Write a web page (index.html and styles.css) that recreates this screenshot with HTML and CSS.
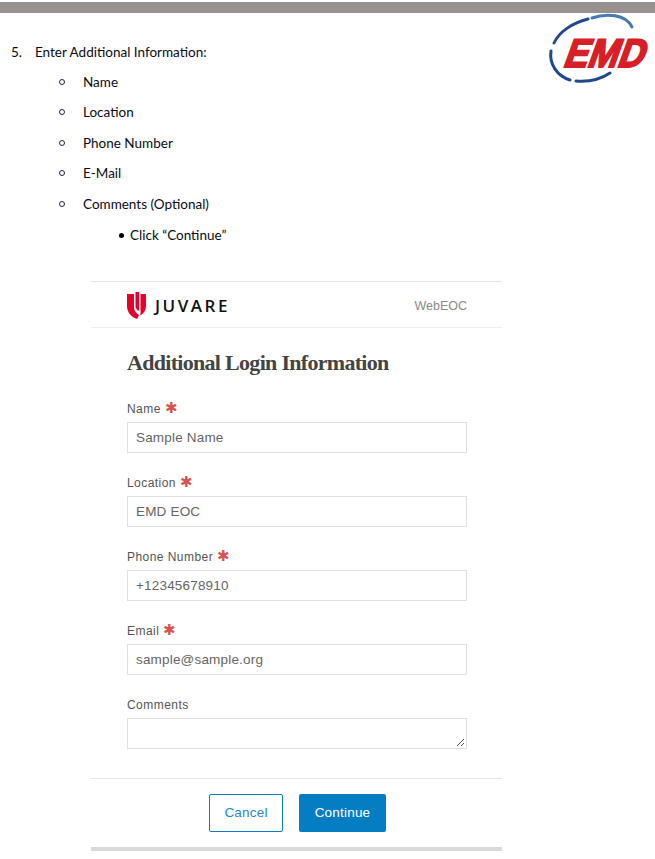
FILE: index.html
```html
<!DOCTYPE html>
<html lang="en">
<head>
<meta charset="utf-8">
<title>Enter Additional Information</title>
<link rel="stylesheet" href="styles.css">
</head>
<body>
<div class="band"></div>
<section class="doc">
  <div class="steps">
    <div class="step"><span class="num">5.</span><span>Enter Additional Information:</span></div>
    <div class="sub"><span class="ring"></span><span>Name</span></div>
    <div class="sub"><span class="ring"></span><span>Location</span></div>
    <div class="sub"><span class="ring"></span><span>Phone Number</span></div>
    <div class="sub"><span class="ring"></span><span>E-Mail</span></div>
    <div class="sub"><span class="ring"></span><span>Comments (Optional)</span></div>
    <div class="subsub"><span class="dot"></span><span>Click “Continue”</span></div>
  </div>
  <svg class="emd" width="107" height="70" viewBox="0 0 107 70" aria-label="EMD">
    <path class="arc dark" d="M6 29 C 11 18 24 9 40 5" />
    <path class="arc light" d="M44 4 C 58 -1 78 0 84 13" />
    <path class="arc dark" d="M3 37 C 1 50 9 62 22 66" />
    <path class="arc dark" d="M28 67 C 40 68 53 65 62 59" />
    <text class="emd-text" transform="translate(14 53) skewX(-20) scale(.9 1)">EMD</text>
  </svg>
</section>
<main class="panel">
  <header class="panel-head">
    <div class="brand">
      <svg width="19" height="27" viewBox="0 0 19 27">
        <path fill="#e4022d" d="M0 2 H7 V15 C7 19 9 21 12 23 L10 27 C4 25 0 20 0 14 Z"/>
        <path fill="#e4022d" d="M8.500 0 H12 V19 C10 18 8.500 16.500 8.500 14 Z"/>
        <path fill="#e4022d" d="M13.500 2 H19 V14 C19 18 17 21 13.500 23.500 Z"/>
      </svg>
      <span class="brand-name">JUVARE</span>
    </div>
    <span class="product">WebEOC</span>
  </header>
  <form class="form">
    <h1 class="title">Additional Login Information</h1>
    <div class="field">
      <div class="label">Name <span class="req">✱</span></div>
      <div class="input">Sample Name</div>
    </div>
    <div class="field">
      <div class="label">Location <span class="req">✱</span></div>
      <div class="input">EMD EOC</div>
    </div>
    <div class="field">
      <div class="label">Phone Number <span class="req">✱</span></div>
      <div class="input">+12345678910</div>
    </div>
    <div class="field">
      <div class="label">Email <span class="req">✱</span></div>
      <div class="input">sample@sample.org</div>
    </div>
    <div class="field">
      <div class="label">Comments</div>
      <div class="input area">
        <svg width="9" height="9" viewBox="0 0 9 9"><path d="M8 1 L1 8 M8 5 L5 8" stroke="#555" stroke-width="1" fill="none"/></svg>
      </div>
    </div>
  </form>
  <footer class="actions">
    <span class="btn ghost">Cancel</span>
    <span class="btn solid">Continue</span>
  </footer>
</main>
</body>
</html>
```
FILE: styles.css
```css
* { box-sizing: border-box; }
html, body { margin: 0; padding: 0; background: #fff; }
body { width: 655px; height: 859px; overflow: hidden; position: relative; }

.band { height: 11px; margin-top: 2px; background: #97928f; }

.doc { display: flex; justify-content: space-between; align-items: flex-start; height: 268px; }
.steps { padding-top: 24px; font: 13.500px/30.500px Lato, sans-serif; color: #0b0b16; }
.step { display: flex; padding-left: 11px; margin-bottom: -1px; }
.num { width: 24px; }
.sub { display: flex; align-items: center; padding-left: 59px; }
.ring { width: 6px; height: 6px; border: 1px solid #1c2a50; border-radius: 50%; margin-right: 18px; }
.subsub { display: flex; align-items: center; padding-left: 119px; margin-top: 1px; }
.dot { width: 5px; height: 5px; background: #000; border-radius: 50%; margin-right: 6px; }

.emd { flex: none; margin-top: 1px; overflow: visible; }
.arc { fill: none; stroke-width: 3; stroke-linecap: round; }
.arc.dark { stroke: #21498f; }
.arc.light { stroke: #4a78b5; }
.emd-text { font: 700 40px "Liberation Sans", sans-serif; fill: #d81f27; stroke: #d81f27; stroke-width: 2; }

.panel { width: 411px; margin-left: 91px; border-top: 1px solid #e4e4e4; border-bottom: 4px solid #d9d9d9; height: 570px; color: #444; font-family: "Liberation Sans", sans-serif; }
.panel-head { height: 46px; padding: 8px 35px 0 36px; display: flex; justify-content: space-between; align-items: center; border-bottom: 1px solid #eee; }
.brand { display: flex; align-items: center; gap: 9px; height: 30px; margin-top: -6px; }
.brand-name { font: 600 17px "Open Sans", sans-serif; letter-spacing: 2.500px; color: #111; }
.product { font-size: 12.500px; color: #8a8a8a; margin-top: -6px; }

.form { padding: 0 35px 0 36px; height: 451px; border-bottom: 1px solid #e4e4e4; }
.title { margin: 0; padding: 21px 0 22px; font: 700 22px/28px "Liberation Serif", serif; color: #444; letter-spacing: -.7px; }
.field { margin-bottom: 20px; }
.label { font-size: 12px; line-height: 20px; height: 23px; color: #555; letter-spacing: .45px; }
.req { color: #d9534f; font-size: 15px; line-height: 14px; }
.input { height: 31px; border: 1px solid #e0e0e0; padding-left: 8px; font-size: 13.500px; line-height: 29px; color: #666; letter-spacing: .18px; }
.area { position: relative; }
.area svg { position: absolute; right: 1px; bottom: 1px; }

.actions { display: flex; justify-content: center; gap: 16px; padding: 15px 0 0 2px; }
.btn { height: 38px; border-radius: 2px; font-size: 13.500px; line-height: 38px; text-align: center; letter-spacing: .2px; }
.ghost { width: 74px; border: 1px solid #0a7cc0; color: #2a86c4; line-height: 36px; background: #fff; }
.solid { width: 87px; background: #057dc2; color: #fff; }
```
